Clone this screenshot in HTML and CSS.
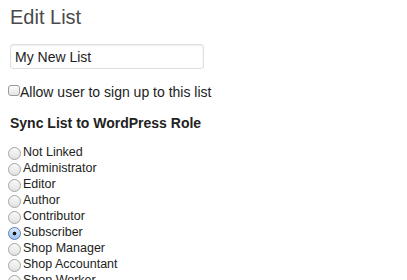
FILE: index.html
```html
<!DOCTYPE html>
<html>
<head>
<meta charset="utf-8">
<link rel="stylesheet" href="styles.css">
</head>
<body>
<div class="wrap">
  <h2 class="title">Edit List</h2>
  <input class="name-input" type="text" value="My New List">
  <label class="check-row"><input class="check" type="checkbox">Allow user to sign up to this list</label>
  <h3 class="section">Sync List to WordPress Role</h3>
  <div class="roles">
    <label class="role"><input class="radio" type="radio" name="role"><span>Not Linked</span></label>
    <label class="role"><input class="radio" type="radio" name="role"><span>Administrator</span></label>
    <label class="role"><input class="radio" type="radio" name="role"><span>Editor</span></label>
    <label class="role"><input class="radio" type="radio" name="role"><span>Author</span></label>
    <label class="role"><input class="radio" type="radio" name="role"><span>Contributor</span></label>
    <label class="role"><input class="radio" type="radio" name="role" checked><span>Subscriber</span></label>
    <label class="role"><input class="radio" type="radio" name="role"><span>Shop Manager</span></label>
    <label class="role"><input class="radio" type="radio" name="role"><span>Shop Accountant</span></label>
    <label class="role"><input class="radio" type="radio" name="role"><span>Shop Worker</span></label>
  </div>
</div>
</body>
</html>
```

FILE: styles.css
```css
html, body {
  margin: 0;
  padding: 0;
  background: #fff;
}
body {
  font-family: "Liberation Sans", Arial, sans-serif;
  color: #222;
  overflow: hidden;
}
.wrap {
  display: flex;
  flex-direction: column;
  align-items: flex-start;
  padding-left: 10px;
}
.title {
  margin: 5px 0 0 0;
  font-size: 20px;
  line-height: 24px;
  font-weight: normal;
  color: #4a4a4a;
}
.name-input {
  margin: 15px 0 0 0;
  box-sizing: border-box;
  width: 194px;
  height: 25px;
  padding: 0 4px;
  border: 1px solid #dfdfdf;
  border-radius: 3px;
  box-shadow: inset 0 1px 2px rgba(0,0,0,0.07);
  font-family: "Liberation Sans", Arial, sans-serif;
  font-size: 14px;
  color: #222;
  background: #fff;
  outline: none;
}
.check-row {
  margin-top: 15px;
  margin-left: -2px;
  display: flex;
  align-items: flex-start;
  font-size: 14px;
  line-height: 16px;
  color: #222;
}
.check {
  appearance: none;
  -webkit-appearance: none;
  margin: 1px 0 0 0;
  width: 12px;
  height: 11px;
  box-sizing: border-box;
  border: 1px solid #9a9a9a;
  border-radius: 3px;
  background: linear-gradient(#fdfdfd, #e4e4e4);
}
.section {
  margin: 15px 0 0 0;
  font-size: 14px;
  line-height: 16px;
  font-weight: bold;
  color: #222;
}
.roles {
  margin-top: 13px;
  margin-left: -2px;
  display: flex;
  flex-direction: column;
}
.role {
  display: flex;
  align-items: flex-start;
  height: 16px;
  font-size: 12.5px;
  line-height: 16px;
  color: #222;
}
.role span {
  margin-left: 2px;
}
.radio {
  appearance: none;
  -webkit-appearance: none;
  margin: 3px 0 0 0;
  width: 13px;
  height: 13px;
  box-sizing: border-box;
  border: 1px solid #a4a4a4;
  border-radius: 50%;
  background: linear-gradient(#fafafa, #e2e2e2);
}
.radio:checked {
  border-color: #5a7eb5;
  background: radial-gradient(circle at 50% 50%, #1a1a1a 0, #1a1a1a 1.6px, transparent 2.2px), linear-gradient(#dbe9fb, #9ec2ef);
}
```
